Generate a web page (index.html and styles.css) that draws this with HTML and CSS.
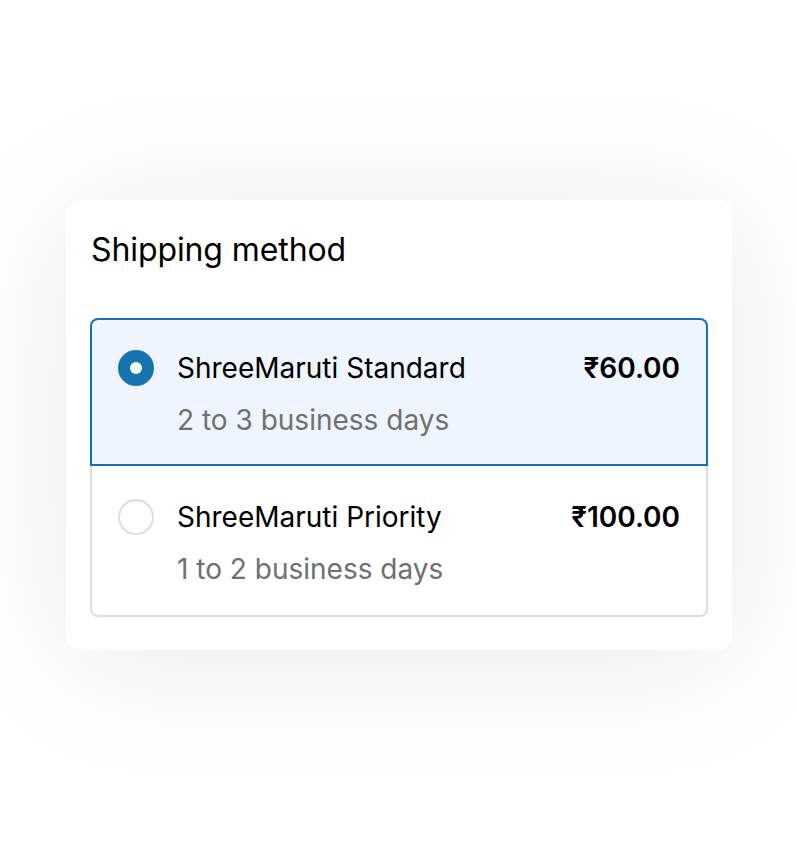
FILE: index.html
```html
<!DOCTYPE html>
<html lang="en">
<head>
<meta charset="utf-8">
<title>Shipping method</title>
<link rel="stylesheet" href="styles.css">
</head>
<body>
<main class="stage">
  <section class="card">
    <h2 class="card-title">Shipping method</h2>
    <div class="options">
      <label class="option option--selected">
        <span class="radio radio--on"><span class="radio-dot"></span></span>
        <span class="option-body">
          <span class="option-top">
            <span class="option-name">ShreeMaruti Standard</span>
            <span class="option-price">₹60.00</span>
          </span>
          <span class="option-sub">2 to 3 business days</span>
        </span>
      </label>
      <label class="option option--last">
        <span class="radio"></span>
        <span class="option-body">
          <span class="option-top">
            <span class="option-name">ShreeMaruti Priority</span>
            <span class="option-price">₹100.00</span>
          </span>
          <span class="option-sub">1 to 2 business days</span>
        </span>
      </label>
    </div>
  </section>
</main>
</body>
</html>
```
FILE: styles.css
```css
* { box-sizing: border-box; }
html, body { margin: 0; padding: 0; background: #ffffff; }
body { font-family: Inter, "Noto Sans", sans-serif; color: #000; }

.stage {
  min-height: 850px;
  padding-left: 2px;
  display: flex;
  align-items: center;
  justify-content: center;
}

.card {
  width: 666px;
  background: #fff;
  border-radius: 14px;
  padding: 24px 24px 33px;
  box-shadow: 0 10px 140px rgba(0, 0, 0, 0.09);
}

.card-title {
  margin: 0 0 48px;
  padding-top: 6px;
  padding-left: 1px;
  font-size: 32px;
  font-weight: 400;
  line-height: 40px;
  letter-spacing: -0.1px;
}

.options {
  display: flex;
  flex-direction: column;
}

.option {
  display: flex;
  align-items: flex-start;
  gap: 23px;
  border: 2px solid #dedede;
  padding: 27px 26px 23px 26px;
}

.option--selected {
  background: #eef5fe;
  border-color: #1773b0;
  border-radius: 8px 8px 0 0;
}

.option--last {
  border-top: 0;
  border-radius: 0 0 8px 8px;
  padding-top: 30px;
  padding-bottom: 25px;
}

.radio {
  flex: none;
  width: 36px;
  height: 36px;
  margin-top: 3px;
  border-radius: 50%;
  border: 2px solid #dedede;
  background: #fff;
  display: flex;
  align-items: center;
  justify-content: center;
}

.radio--on {
  border: 0;
  background: #1773b0;
}

.radio-dot {
  width: 12px;
  height: 12px;
  border-radius: 50%;
  background: #fff;
}

.option-body {
  flex: 1;
  display: flex;
  flex-direction: column;
  gap: 10px;
}

.option-top {
  display: flex;
  justify-content: space-between;
  align-items: baseline;
}

.option-name {
  font-size: 28px;
  line-height: 42px;
}

.option-price {
  font-size: 28px;
  line-height: 42px;
  font-weight: 600;
}

.option-sub {
  font-size: 28px;
  line-height: 42px;
  color: #707070;
}
```
